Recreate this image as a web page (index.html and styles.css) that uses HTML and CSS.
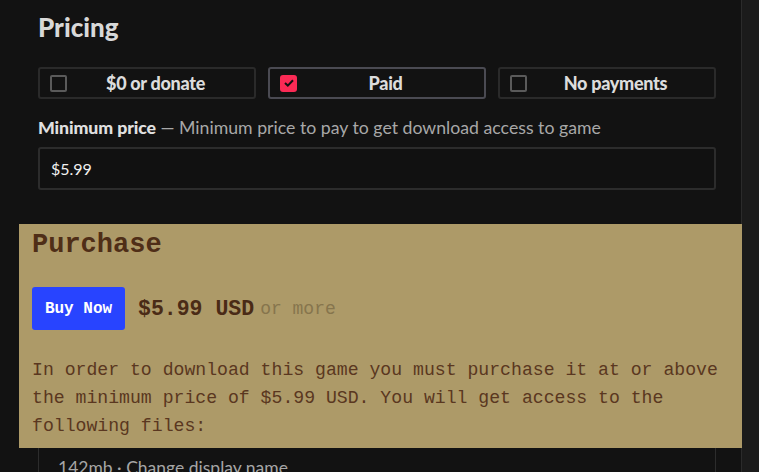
FILE: index.html
```html
<!DOCTYPE html>
<html>
<head>
    <meta charset="UTF-8">
    <title>Edit game - Pricing</title>
    <link rel="stylesheet" href="styles.css">
</head>
<body>
    <div class="layout">
        <div class="main">
            <h2 class="section-title">Pricing</h2>

            <div class="pricing-options">
                <label class="price-option">
                    <span class="check"></span>
                    <span class="option-label">$0 or donate</span>
                </label>
                <label class="price-option active">
                    <span class="check checked">
                        <svg width="10" height="8" viewBox="0 0 10 8"><path d="M1 4 L3.8 6.6 L9 1.2" fill="none" stroke="#111" stroke-width="2"/></svg>
                    </span>
                    <span class="option-label">Paid</span>
                </label>
                <label class="price-option">
                    <span class="check"></span>
                    <span class="option-label">No payments</span>
                </label>
            </div>

            <div class="field">
                <div class="field-label"><strong>Minimum price</strong> <span class="sub">— Minimum price to pay to get download access to game</span></div>
                <input class="text-input" type="text" value="$5.99">
            </div>

            <div class="files-box">
                <div class="file-row">142mb · Change display name</div>
            </div>

            <div class="purchase-preview">
                <h2 class="purchase-title">Purchase</h2>
                <div class="buy-row">
                    <button class="buy-btn">Buy Now</button>
                    <span class="buy-price">$5.99 USD</span>
                    <span class="buy-more">or more</span>
                </div>
                <p class="buy-text">In order to download this game you must purchase it at or above the minimum price of $5.99 USD. You will get access to the following files:</p>
            </div>
        </div>
        <div class="side"></div>
    </div>
</body>
</html>
```

FILE: styles.css
```css
body {
    margin: 0;
    background: #121212;
    font-family: Lato, 'Noto Sans', sans-serif;
    color: #d4d4d4;
    height: 472px;
    overflow: hidden;
}

.layout {
    display: flex;
    height: 472px;
}

.main {
    position: relative;
    width: 742px;
    box-sizing: border-box;
    padding: 0 25px 0 38px;
    border-right: 1px solid #2b2b2b;
    background: #121212;
}

.side {
    flex: 1;
    background: #1b1b1b;
}

.section-title {
    margin: 0;
    padding-top: 11px;
    font-size: 26px;
    line-height: 32px;
    font-weight: 900;
    color: #d8d8d8;
}

.pricing-options {
    display: grid;
    grid-template-columns: 1fr 1fr 1fr;
    gap: 12px;
    margin-top: 24px;
}

.price-option {
    display: flex;
    align-items: center;
    height: 32px;
    box-sizing: border-box;
    padding: 0 10px;
    border: 2px solid #2a2a2a;
    border-radius: 3px;
}

.price-option.active {
    border-color: #4a4a52;
}

.check {
    width: 17px;
    height: 17px;
    box-sizing: border-box;
    border: 2px solid #5a5a5a;
    border-radius: 2px;
    display: flex;
    align-items: center;
    justify-content: center;
}

.check.checked {
    border: none;
    background: #fa2a55;
    border-radius: 3px;
}

.option-label {
    flex: 1;
    text-align: center;
    font-size: 18px;
    font-weight: 900;
    color: #dcdcdc;
    letter-spacing: -0.3px;
}

.field {
    margin-top: 17px;
}

.field-label {
    font-size: 17.7px;
    line-height: 24px;
    color: #e0e0e0;
}

.field-label strong {
    font-weight: 900;
    letter-spacing: -0.1px;
}

.field-label .sub {
    color: #a8a8a8;
}

.text-input {
    display: block;
    width: 100%;
    box-sizing: border-box;
    height: 43px;
    margin-top: 7px;
    padding: 0 11px;
    background: #111;
    border: 2px solid #2c2c2c;
    border-radius: 3px;
    color: #f0f0f0;
    font-family: Lato, sans-serif;
    font-size: 16px;
}

.files-box {
    margin-top: 34px;
    height: 300px;
    border-left: 1px solid #2c2c2c;
    border-right: 1px solid #2c2c2c;
    padding: 233px 19px 0;
}

.file-row {
    font-size: 17.5px;
    color: #a6a6a6;
}

.purchase-preview {
    position: absolute;
    left: 19px;
    top: 224px;
    width: 723px;
    height: 224px;
    box-sizing: border-box;
    padding: 6px 13px 0;
    background: #ad9a68;
    font-family: 'Liberation Mono', 'DejaVu Sans Mono', monospace;
    color: #4f2e17;
}

.purchase-title {
    margin: 0;
    font-size: 27px;
    line-height: 30px;
    font-weight: 700;
}

.buy-row {
    display: flex;
    align-items: center;
    margin-top: 27px;
}

.buy-btn {
    height: 43px;
    width: 93px;
    border: none;
    border-radius: 3px;
    background: #2844ff;
    color: #fff;
    font-family: 'Liberation Mono', monospace;
    font-size: 16px;
    font-weight: 700;
    padding: 0;
}

.buy-price {
    margin-left: 13px;
    font-size: 21.5px;
    font-weight: 700;
    color: #4a2b16;
}

.buy-more {
    margin-left: 6px;
    font-size: 18px;
    color: #86754d;
}

.buy-text {
    margin: 26px 0 0;
    font-size: 18.15px;
    line-height: 28px;
    color: #5a3720;
}
```
